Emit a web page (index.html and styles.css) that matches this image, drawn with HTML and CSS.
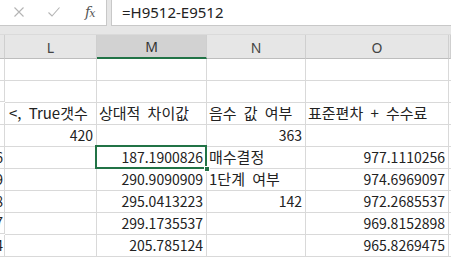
FILE: index.html
```html
<!DOCTYPE html>
<html lang="ko">
<head>
<meta charset="utf-8">
<link rel="stylesheet" href="styles.css">
</head>
<body>
<div class="app">
  <div class="fbar">
    <div class="fbtns">
      <svg class="ic" width="12" height="12" viewBox="0 0 12 12"><path d="M1.5 1.5 L10.5 10.5 M10.5 1.5 L1.5 10.5" stroke="#b4b4b4" stroke-width="1.1" fill="none"/></svg>
      <svg class="ic" width="14" height="12" viewBox="0 0 14 12"><path d="M1.5 6.5 L5 10 L12.5 1.5" stroke="#b4b4b4" stroke-width="1.1" fill="none"/></svg>
      <span class="fx">f<span class="fxx">x</span></span>
    </div>
    <div class="finput">=H9512-E9512</div>
  </div>
  <div class="sheet">
    <div class="hd k"></div>
    <div class="hd">L</div>
    <div class="hd sel">M</div>
    <div class="hd">N</div>
    <div class="hd">O</div>
    <div class="hd p"></div>

    <div class="c k r22"></div><div class="c"></div><div class="c"></div><div class="c"></div><div class="c"></div><div class="c p"></div>
    <div class="c k r21"></div><div class="c"></div><div class="c"></div><div class="c"></div><div class="c"></div><div class="c p"></div>

    <div class="c k r22"></div><div class="c t ov">&lt;, True갯수</div><div class="c t">상대적 차이값</div><div class="c t">음수 값 여부</div><div class="c t">표준편차 + 수수료</div><div class="c p"></div>
    <div class="c k r22"></div><div class="c n">420</div><div class="c"></div><div class="c n">363</div><div class="c"></div><div class="c p"></div>
    <div class="c k r22 n">6</div><div class="c"></div><div class="c n active">187.1900826<span class="handle"></span></div><div class="c t">매수결정</div><div class="c n">977.1110256</div><div class="c p"></div>
    <div class="c k r22 n">9</div><div class="c"></div><div class="c n">290.9090909</div><div class="c t">1단계 여부</div><div class="c n">974.6969097</div><div class="c p"></div>
    <div class="c k r22 n">8</div><div class="c"></div><div class="c n">295.0413223</div><div class="c n">142</div><div class="c n">972.2685537</div><div class="c p"></div>
    <div class="c k r21 n">7</div><div class="c"></div><div class="c n">299.1735537</div><div class="c"></div><div class="c n">969.8152898</div><div class="c p"></div>
    <div class="c k r22 n">4</div><div class="c"></div><div class="c n">205.785124</div><div class="c"></div><div class="c n">965.8269475</div><div class="c p"></div>
  </div>
</div>
</body>
</html>
```

FILE: styles.css
```css
* { box-sizing: border-box; }
html, body { margin: 0; padding: 0; background: #fff; }
body {
  width: 451px;
  height: 259px;
  overflow: hidden;
  font-family: "Noto Sans CJK KR", "Noto Sans", sans-serif;
  color: #222;
}
.app { display: flex; flex-direction: column; }

.fbar {
  display: flex;
  height: 35px;
  background: #e6e6e6;
  padding-bottom: 8px;
  gap: 4px;
  border-bottom: 1px solid #dadada;
}
.fbtns {
  width: 107px;
  background: #fff;
  border-right: 1px solid #c8c8c8;
  border-bottom: 1px solid #c8c8c8;
  display: flex;
  align-items: center;
  padding-left: 13px;
  padding-bottom: 1px;
}
.ic { display: block; }
.ic + .ic { margin-left: 22px; }
.fx {
  margin-left: 24px;
  font-family: "DejaVu Serif", "Liberation Serif", serif;
  font-style: italic;
  font-size: 14px;
  color: #555;
  letter-spacing: -1px;
}
.fxx { font-size: 11px; }
.finput {
  flex: 1;
  background: #fff;
  border-left: 1px solid #c8c8c8;
  border-bottom: 1px solid #c8c8c8;
  font-family: "Noto Sans", sans-serif;
  font-size: 15px;
  color: #222;
  padding-left: 10px;
  display: flex;
  align-items: center;
  padding-bottom: 2px;
}

.sheet {
  display: grid;
  grid-template-columns: 5px 92px 110px 99px 143px 2px;
  grid-template-rows: 24px;
  grid-auto-rows: 22px;
}
.hd {
  background: #e6e6e6;
  border-right: 1px solid #cfcfcf;
  border-bottom: 1px solid #bdbdbd;
  display: flex;
  align-items: center;
  justify-content: center;
  font-family: "Noto Sans", sans-serif;
  font-size: 14px;
  color: #444;
  padding-top: 1px;
}
.hd.sel {
  background: #d2d2d2;
  border-bottom: 2px solid #217346;
  color: #333;
}
.c {
  border-right: 1px solid #d9d9d9;
  border-bottom: 1px solid #d9d9d9;
  font-size: 14px;
  display: flex;
  align-items: flex-end;
  padding: 0 3px 1px 3px;
  white-space: nowrap;
  overflow: hidden;
  line-height: 19px;
  color: #222;
}
.c.r21 { height: 21px; }
.c.r22 { height: 22px; }
.c.n { justify-content: flex-end; }
.c.t {
  justify-content: flex-start;
  padding-left: 2px;
  font-size: 15px;
  word-spacing: 3px;
  line-height: 20px;
}
.c.ov { padding-left: 4px; }
.c.k { padding: 0 1px 1px 0; overflow: hidden; }
.c.active {
  position: relative;
  overflow: visible;
}
.c.active::after {
  content: "";
  position: absolute;
  left: -2px;
  top: -2px;
  right: -1px;
  bottom: -1px;
  border: 2px solid #217346;
  pointer-events: none;
}
.handle {
  position: absolute;
  right: -4px;
  bottom: -4px;
  width: 6px;
  height: 6px;
  background: #217346;
  border: 1px solid #fff;
  z-index: 2;
}
```
